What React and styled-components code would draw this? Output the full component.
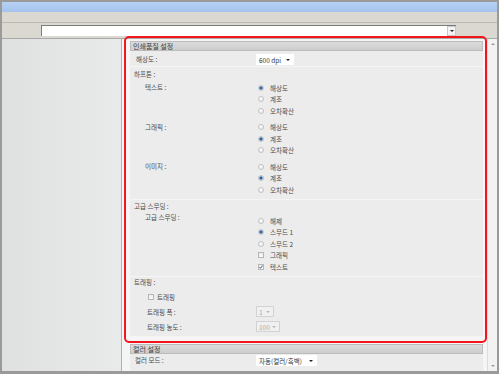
import React from 'react';
import styled, { createGlobalStyle } from 'styled-components';

const GlobalStyle = createGlobalStyle`
  html, body { margin: 0; padding: 0; background: #fff; }
  body { font-family: "Noto Sans CJK KR", "Noto Sans", sans-serif; overflow: hidden; }
  * { box-sizing: border-box; }
`;

const Window = styled.div`
  position: relative;
  width: 499px;
  height: 374px;
  border: 2px solid #9a9a9a;
  border-bottom-width: 3px;
  display: flex;
  flex-direction: column;
  background: #e6e6e6;
  overflow: hidden;
`;

const TitleBar = styled.div`
  flex: none;
  height: 10px;
  background: linear-gradient(#b6d1f4, #a4c4ee);
`;

const Toolbar = styled.div`
  flex: none;
  height: 11px;
  background: #dbd7d1;
  border-bottom: 1px solid #bcb8b2;
`;

const AddressRow = styled.div`
  flex: none;
  height: 16px;
  background: #dbd7d1;
  border-bottom: 1px solid #a9a9a9;
  padding: 2px 0 0 39px;
`;

const AddressInput = styled.div`
  width: 415px;
  height: 11px;
  background: #fff;
  border-top: 1px solid #7c7c7c;
  border-left: 1px solid #7c7c7c;
  display: flex;
  justify-content: flex-end;
`;

const DropButton = styled.div`
  width: 9px;
  height: 10px;
  border: 1px solid #c8c8c8;
  background: #f4f4f4;
  display: flex;
  align-items: center;
  justify-content: center;

  &::after {
    content: '';
    border-left: 2px solid transparent;
    border-right: 2px solid transparent;
    border-top: 2px solid #222;
  }
`;

const Body = styled.div`
  flex: 1;
  display: flex;
  min-height: 0;
`;

const Sidebar = styled.div`
  width: 120px;
  flex: none;
  background: linear-gradient(to right, #dfe1e1, #e9eaea);
  border-right: 1px solid #b0b2b2;
`;

const Main = styled.div`
  flex: 1;
  background: #f5f5f5;
  padding: 2px 4px 0 8px;
  display: flex;
  flex-direction: column;
`;

const Scrollbar = styled.div`
  width: 10px;
  flex: none;
  background: #f2f2f2;
  border-left: 1px solid #dcdcdc;
  display: flex;
  flex-direction: column;
  justify-content: space-between;
  align-items: center;
  padding: 4px 0 4px;
`;

const Arrow = styled.span`
  border-left: 2px solid transparent;
  border-right: 2px solid transparent;
  ${(p) => (p.$up ? 'border-bottom: 2px solid #9a9a9a;' : 'border-top: 2px solid #9a9a9a;')}
`;

const Header = styled.div`
  flex: none;
  height: 10px;
  background: linear-gradient(#dbdbdb, #cdcdcd);
  border: 1px solid #bcbcbc;
  padding-left: 2px;
  font-size: 7px;
  line-height: 8px;
  color: #3c3c3c;
  white-space: nowrap;
`;

const Section = styled.div`
  background: ${(p) => (p.$plain ? 'transparent' : '#ececec')};
  padding: ${(p) => p.$pad || '0'};
  padding-left: ${(p) => (p.$plain ? 0 : 4)}px;
  margin-top: ${(p) => p.$gap ?? 1}px;
  flex: ${(p) => (p.$fill ? 1 : 'none')};
`;

const GroupTitle = styled.div`
  height: ${(p) => p.$h || 12}px;
  line-height: ${(p) => p.$h || 12}px;
  font-size: 6.5px;
  color: #4a4a4a;
  white-space: nowrap;
`;

const Groups = styled.div`
  display: flex;
  flex-direction: column;
  gap: 5px;
  margin-top: 2px;
`;

const Row = styled.div`
  display: grid;
  grid-template-columns: 122px auto;
  align-items: start;
  margin-top: ${(p) => p.$mt || 0}px;
`;

const Label = styled.div`
  padding-left: ${(p) => p.$indent || 0}px;
  line-height: ${(p) => p.$lh || 11.5}px;
  margin-top: ${(p) => p.$shift || 0}px;
  font-size: 6.5px;
  color: #4a4a4a;
  white-space: nowrap;
`;

const Options = styled.div`
  display: flex;
  flex-direction: column;
  padding-left: 2px;
`;

const Option = styled.div`
  display: flex;
  align-items: center;
  gap: ${(p) => p.$gap ?? 6}px;
  height: ${(p) => p.$h || 11.5}px;
  padding-left: ${(p) => p.$indent || 0}px;
  margin-top: ${(p) => p.$mt || 0}px;
  font-size: 6.5px;
  color: #4a4a4a;
  white-space: nowrap;
`;

const Radio = styled.span`
  width: 6px;
  height: 6px;
  flex: none;
  border-radius: 50%;
  border: 1px solid #c2c2c2;
  background: ${(p) =>
    p.$checked
      ? 'radial-gradient(circle, #2b5c97 0 1.2px, #86a9d4 1.6px 2px, #f2f2f2 2.4px)'
      : 'radial-gradient(circle at 40% 35%, #ffffff, #e4e4e4)'};
`;

const Box = styled.span`
  width: 6px;
  height: 6px;
  flex: none;
  border: 1px solid #b6b6b6;
  background: linear-gradient(#ececec, #fbfbfb);
  display: flex;
  align-items: center;
  justify-content: center;
`;

const Check = ({ checked }) => (
  <Box>
    {checked && (
      <svg width="4" height="4" viewBox="0 0 4 4">
        <path d="M0.4 2 L1.5 3.3 L3.6 0.5" fill="none" stroke="#2f527f" strokeWidth="0.9" />
      </svg>
    )}
  </Box>
);

const SelectBox = styled.div`
  width: ${(p) => p.$w}px;
  height: ${(p) => p.$h || 11}px;
  display: flex;
  align-items: center;
  justify-content: space-between;
  padding: 0 3px 0 2px;
  background: ${(p) => (p.$disabled ? '#f0f0f0' : '#fff')};
  border: 1px solid ${(p) => (p.$disabled ? '#d2d2d2' : '#fff')};
  font-size: 6.5px;
  color: ${(p) => (p.$disabled ? '#a8a8a8' : '#333')};
  white-space: nowrap;

  &::after {
    content: '';
    border-left: 2px solid transparent;
    border-right: 2px solid transparent;
    border-top: 2px solid ${(p) => (p.$disabled ? '#b8b8b8' : '#222')};
  }
`;

const Highlight = styled.div`
  position: absolute;
  left: 122px;
  top: 34px;
  width: 363px;
  height: 307px;
  border: 2px solid #f2161c;
  border-radius: 5px;
  pointer-events: none;
`;

const RadioGroup = ({ items, selected }) => (
  <Options>
    {items.map((it) => (
      <Option key={it}>
        <Radio $checked={it === selected} />
        {it}
      </Option>
    ))}
  </Options>
);

const quality = ['해상도', '계조', '오차확산'];

export default function App() {
  return (
    <>
      <GlobalStyle />
      <Window>
        <TitleBar />
        <Toolbar />
        <AddressRow>
          <AddressInput>
            <DropButton />
          </AddressInput>
        </AddressRow>
        <Body>
          <Sidebar />
          <Main>
            <Header>인쇄품질 설정</Header>
            <Section $gap={0} $pad="3px 0 1px">
              <Row>
                <Label $indent={2} $lh={11}>해상도 :</Label>
                <SelectBox $w={38}>600 dpi</SelectBox>
              </Row>
            </Section>
            <Section $pad="1px 0 3.5px">
              <GroupTitle>하프톤 :</GroupTitle>
              <Groups>
                <Row>
                  <Label $indent={11}>텍스트 :</Label>
                  <RadioGroup items={quality} selected="해상도" />
                </Row>
                <Row>
                  <Label $indent={11}>그래픽 :</Label>
                  <RadioGroup items={quality} selected="계조" />
                </Row>
                <Row>
                  <Label $indent={11}>이미지 :</Label>
                  <RadioGroup items={quality} selected="계조" />
                </Row>
              </Groups>
            </Section>
            <Section $pad="0 0 3.5px">
              <GroupTitle>고급 스무딩 :</GroupTitle>
              <Row $mt={3}>
                <Label $indent={11} $shift={-3}>고급 스무딩 :</Label>
                <Options>
                  <Option><Radio />해제</Option>
                  <Option><Radio $checked />스무드 1</Option>
                  <Option><Radio />스무드 2</Option>
                  <Option><Check />그래픽</Option>
                  <Option><Check checked />텍스트</Option>
                </Options>
              </Row>
            </Section>
            <Section $pad="0 0 3px">
              <GroupTitle $h={11}>트래핑 :</GroupTitle>
              <Option $indent={14} $gap={3} $h={12} $mt={3}>
                <Check />트래핑
              </Option>
              <Row $mt={3}>
                <Label $indent={13} $lh={12}>트래핑 폭 :</Label>
                <SelectBox $w={18} $h={11} $disabled>1</SelectBox>
              </Row>
              <Row $mt={3}>
                <Label $indent={13} $lh={12}>트래핑 농도 :</Label>
                <SelectBox $w={24} $h={11} $disabled>100</SelectBox>
              </Row>
            </Section>
            <Section $gap={8} $plain>
              <Header>컬러 설정</Header>
            </Section>
            <Section $gap={0} $pad="1px 0 0" $fill>
              <Row>
                <Label $indent={1} $lh={11}>컬러 모드 :</Label>
                <SelectBox $w={61}>자동(컬러/흑백)</SelectBox>
              </Row>
            </Section>
          </Main>
          <Scrollbar>
            <Arrow $up />
            <Arrow />
          </Scrollbar>
        </Body>
        <Highlight />
      </Window>
    </>
  );
}
